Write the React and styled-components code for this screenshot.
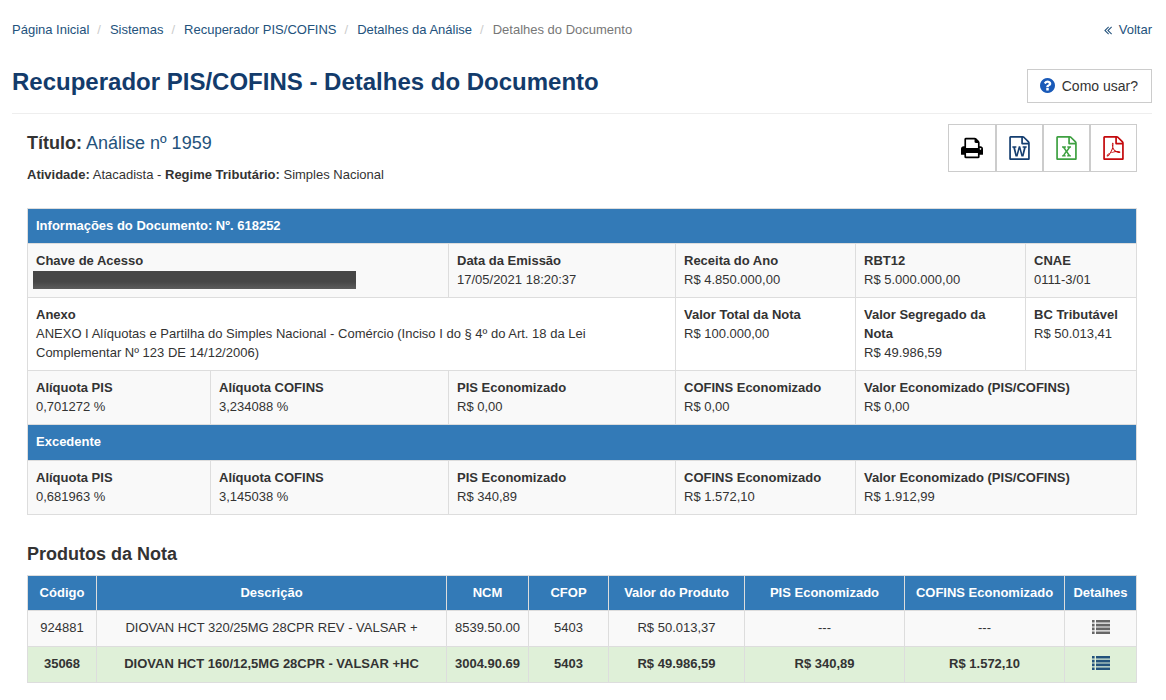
import styled, { createGlobalStyle } from "styled-components";

const infoColumns = [183, 238, 227, 180, 170, 111];

const productColumns = [
  { title: "Código", width: 69 },
  { title: "Descrição", width: 350 },
  { title: "NCM", width: 82 },
  { title: "CFOP", width: 80 },
  { title: "Valor do Produto", width: 136 },
  { title: "PIS Economizado", width: 160 },
  { title: "COFINS Economizado", width: 160 },
  { title: "Detalhes", width: 72 },
];

const products = [
  {
    values: ["924881", "DIOVAN HCT 320/25MG 28CPR REV - VALSAR +", "8539.50.00", "5403", "R$ 50.013,37", "---", "---"],
    active: false,
  },
  {
    values: ["35068", "DIOVAN HCT 160/12,5MG 28CPR - VALSAR +HC", "3004.90.69", "5403", "R$ 49.986,59", "R$ 340,89", "R$ 1.572,10"],
    active: true,
  },
];

const breadcrumbs = ["Página Inicial", "Sistemas", "Recuperador PIS/COFINS", "Detalhes da Análise"];

const FILE_OUTLINE =
  "M1596 380q28 28 48 76t20 88v1152q0 40-28 68t-68 28h-1344q-40 0-68-28t-28-68v-1600q0-40 28-68t68-28h896q40 0 88 20t76 48zm-444-244v376h376q-10-29-22-41l-313-313q-12-12-41-22zm384 1528v-1024h-416q-40 0-68-28t-28-68v-416h-768v1536h1280z";

const FILE_WORD =
  "m-1175-896v107h70l164 661h159l128-485q7-20 10-46 2-16 2-24h4l3 24q1 3 3.5 20t5.5 26l128 485h159l164-661h70v-107h-300v107h90l-99 438q-5 20-7 46l-2 21h-4q0-3-.5-6.5t-1.5-8-1-6.5q-1-5-4-21t-5-25l-144-545h-114l-144 545q-2 9-4.5 24.5t-3.5 21.5l-4 21h-4l-2-21q-2-26-7-46l-99-438h90v-107h-300z";

const FILE_EXCEL =
  "m-979-234v106h281v-106h-75l103-161q5-7 10-16.5t7.5-13.5 3.5-4h2q1 4 5 10 2 4 4.5 7.5t6 8 6.5 8.5l107 161h-76v106h291v-106h-68l-192-273 195-282h67v-107h-279v107h74l-103 159q-4 7-10 16.5t-9 13.5l-2 3h-2q-1-4-5-10-6-11-17-23l-106-159h76v-107h-290v107h68l189 272-194 283h-68z";

const FILE_PDF =
  "m-514-593q33 26 84 56 59-7 117-7 147 0 177 49 16 22 2 52 0 1-1 2l-2 2v1q-6 38-71 38-48 0-115-20t-130-53q-221 24-392 83-153 262-242 262-15 0-28-7l-24-12q-1-1-6-5-10-10-6-36 9-40 56-91.5t132-96.5q14-9 23 6 2 2 2 4 52-85 107-197 68-136 104-262-24-82-30.5-159.5t6.5-127.5q11-40 42-40h22q23 0 35 15 18 21 9 68-2 6-4 8 1 3 1 8v30q-2 123-14 192 55 164 146 238zm-576 411q52-24 137-158-51 40-87.5 84t-49.5 74zm398-920q-15 42-2 132 1-7 7-44 0-3 7-43 1-4 4-8-1-1-1-2-1-2-1-3-1-22-13-36 0 1-1 2v2zm-124 661q135-54 284-81-2-1-13-9.5t-16-13.5q-76-67-127-176-27 86-83 197-30 56-45 83zm646-16q-24-24-140-24 76 28 124 28 14 0 18-1 0-1-2-3z";

const PrintIcon = () => (
  <svg width="22" height="24" viewBox="64 0 1664 1792" fill="currentColor" aria-hidden="true">
    <path d="M448 1536h896v-256h-896v256zm0-640h896v-384h-160q-40 0-68-28t-28-68v-160h-640v640zm1152 64q0-26-19-45t-45-19-45 19-19 45 19 45 45 19 45-19 19-45zm128 0v416q0 13-9.5 22.5t-22.5 9.5h-224v160q0 40-28 68t-68 28h-960q-40 0-68-28t-28-68v-160h-224q-13 0-22.5-9.5t-9.5-22.5v-416q0-79 56.5-135.5t135.5-56.5h64v-544q0-40 28-68t68-28h672q40 0 88 20t76 48l152 152q28 28 48 76t20 88v256h64q79 0 135.5 56.5t56.5 135.5z" />
  </svg>
);

const FileIcon = ({ mark }) => (
  <svg width="21" height="24" viewBox="128 0 1536 1792" fill="currentColor" aria-hidden="true">
    <path d={FILE_OUTLINE + mark} />
  </svg>
);

const BackIcon = () => (
  <svg width="14" height="14" viewBox="0 0 1792 1792" fill="currentColor" aria-hidden="true">
    <path d="M1011 1376q0 13-10 23l-50 50q-10 10-23 10t-23-10l-466-466q-10-10-10-23t10-23l466-466q10-10 23-10t23 10l50 50q10 10 10 23t-10 23l-393 393 393 393q10 10 10 23zm384 0q0 13-10 23l-50 50q-10 10-23 10t-23-10l-466-466q-10-10-10-23t10-23l466-466q10-10 23-10t23 10l50 50q10 10 10 23t-10 23l-393 393 393 393q10 10 10 23z" />
  </svg>
);

const HelpIcon = () => (
  <svg width="15" height="17" viewBox="128 128 1536 1741" fill="currentColor" aria-hidden="true">
    <path d="M1024 1376v-192q0-14-9-23t-23-9h-192q-14 0-23 9t-9 23v192q0 14 9 23t23 9h192q14 0 23-9t9-23zm256-672q0-88-55.5-163t-138.5-116-170-41q-243 0-371 213-15 24 8 42l132 100q7 6 19 6 16 0 25-12 53-68 86-92 34-24 86-24 48 0 85.5 26t37.5 59q0 38-20 61t-68 45q-63 28-115.5 86.5t-52.5 125.5v36q0 14 9 23t23 9h192q14 0 23-9t9-23q0-19 21.5-49.5t54.5-49.5q32-18 49-28.5t46-35 44.5-48 28-60.5 12.5-81zm384 192q0 209-103 385.5t-279.5 279.5-385.5 103-385.5-103-279.5-279.5-103-385.5 103-385.5 279.5-279.5 385.5-103 385.5 103 279.5 279.5 103 385.5z" />
  </svg>
);

const ListIcon = () => (
  <svg width="18" height="14" viewBox="0 0 18 14" fill="currentColor" aria-hidden="true">
    <path d="M0 0h2.6v2.6H0zM4 0h14v2.6H4zM0 3.8h2.6v2.6H0zM4 3.8h14v2.6H4zM0 7.6h2.6v2.6H0zM4 7.6h14v2.6H4zM0 11.4h2.6V14H0zM4 11.4h14V14H4z" />
  </svg>
);

const GlobalStyle = createGlobalStyle`
  * {
    box-sizing: border-box;
  }
  body {
    margin: 0;
    background: #fff;
    color: #333;
    font-family: "Liberation Sans", Arial, sans-serif;
    font-size: 13px;
    line-height: 19px;
  }
  h1, h2, p, ol {
    margin: 0;
    padding: 0;
  }
  svg {
    display: block;
  }
`;

const Page = styled.main`
  padding: 20px 14px 16px 12px;
`;

const TopBar = styled.div`
  display: flex;
  justify-content: space-between;
`;

const Breadcrumb = styled.ol`
  display: flex;
  list-style: none;
`;

const Crumb = styled.li`
  color: #777;
  & + &::before {
    content: "/";
    padding: 0 9px 0 8px;
    color: #ccc;
  }
`;

const Link = styled.a`
  color: #23527c;
  text-decoration: none;
`;

const BackLink = styled(Link)`
  display: flex;
  align-items: center;
  gap: 4px;
`;

const Header = styled.header`
  display: flex;
  align-items: flex-end;
  justify-content: space-between;
  padding: 26px 0 10px;
  border-bottom: 1px solid #eee;
`;

const Title = styled.h1`
  align-self: flex-start;
  color: #133b6b;
  font-size: 24px;
  font-weight: 700;
  line-height: 34px;
`;

const HelpButton = styled.button`
  display: flex;
  align-items: center;
  gap: 7px;
  height: 34px;
  margin-top: 4px;
  padding: 0 13px 0 12px;
  border: 1px solid #ccc;
  background: #fff;
  color: #333;
  font-family: inherit;
  font-size: 14px;
  cursor: pointer;
  & > svg {
    color: #1a5ab8;
  }
`;

const Content = styled.section`
  padding: 10px 15px 0;
`;

const Summary = styled.div`
  display: flex;
  align-items: flex-start;
  justify-content: space-between;
  margin-bottom: 24px;
`;

const Subtitle = styled.h2`
  margin: 9px 0 12px;
  font-size: 18px;
  font-weight: 400;
  line-height: 20px;
`;

const Exports = styled.div`
  display: flex;
`;

const ExportButton = styled.button`
  display: flex;
  align-items: center;
  height: 48px;
  padding: 0 12px;
  border: 1px solid #ccc;
  background: #fff;
  color: ${({ $color }) => $color};
  cursor: pointer;
`;

const Table = styled.table`
  width: 100%;
  table-layout: fixed;
  border-collapse: collapse;
`;

const Col = styled.col`
  width: ${({ $width }) => $width}px;
`;

const HeadCell = styled.th`
  padding: 7px 8px 8px;
  border: 1px solid #ddd;
  background: #337ab7;
  color: #fff;
  font-weight: 700;
  text-align: ${({ $align }) => $align || "center"};
  white-space: nowrap;
`;

const SectionCell = styled.td`
  padding: 7px 8px 9px;
  border: 1px solid #ddd;
  background: #337ab7;
  color: #fff;
  font-weight: 700;
`;

const Row = styled.tr`
  background: ${({ $active, $striped }) => ($active ? "#dff0d8" : $striped ? "#f9f9f9" : "#fff")};
  font-weight: ${({ $active }) => ($active ? 700 : 400)};
`;

const InfoCell = styled.td`
  padding: 7px 8px 8px;
  border: 1px solid #ddd;
  vertical-align: top;
`;

const Label = styled.strong`
  display: block;
`;

const Redacted = styled.div`
  width: 80%;
  max-width: 324px;
  height: 18px;
  margin: 1px -3px 0;
  background: linear-gradient(#464646 60%, #5c5c5c);
`;

const SectionTitle = styled.h2`
  margin: 29px 0 11px;
  font-size: 18px;
  font-weight: 700;
  line-height: 20px;
`;

const ProductCell = styled.td`
  padding: 7px 4px 9px;
  border: 1px solid #ddd;
  text-align: center;
`;

const DetailLink = styled.a`
  display: flex;
  justify-content: center;
  height: 19px;
  padding-top: 2px;
  color: ${({ $active }) => ($active ? "#23527c" : "#666")};
`;

const Field = ({ label, children, span }) => (
  <InfoCell colSpan={span}>
    <Label>{label}</Label>
    {children}
  </InfoCell>
);

const App = () => {
  return (
    <Page>
      <GlobalStyle />
      <TopBar>
        <Breadcrumb aria-label="breadcrumb">
          {breadcrumbs.map((item) => (
            <Crumb key={item}>
              <Link href="#">{item}</Link>
            </Crumb>
          ))}
          <Crumb>Detalhes do Documento</Crumb>
        </Breadcrumb>
        <BackLink href="#">
          <BackIcon />
          Voltar
        </BackLink>
      </TopBar>

      <Header>
        <Title>Recuperador PIS/COFINS - Detalhes do Documento</Title>
        <HelpButton type="button">
          <HelpIcon />
          Como usar?
        </HelpButton>
      </Header>

      <Content>
        <Summary>
          <div>
            <Subtitle>
              <strong>Título:</strong> <Link href="#">Análise nº 1959</Link>
            </Subtitle>
            <p>
              <strong>Atividade:</strong> Atacadista - <strong>Regime Tributário:</strong> Simples Nacional
            </p>
          </div>
          <Exports>
            <ExportButton type="button" $color="#000" aria-label="Imprimir">
              <PrintIcon />
            </ExportButton>
            <ExportButton type="button" $color="#153e70" aria-label="Word">
              <FileIcon mark={FILE_WORD} />
            </ExportButton>
            <ExportButton type="button" $color="#3fa142" aria-label="Excel">
              <FileIcon mark={FILE_EXCEL} />
            </ExportButton>
            <ExportButton type="button" $color="#c4090c" aria-label="PDF">
              <FileIcon mark={FILE_PDF} />
            </ExportButton>
          </Exports>
        </Summary>

        <Table>
          <colgroup>
            {infoColumns.map((width, i) => (
              <Col key={i} $width={width} />
            ))}
          </colgroup>
          <thead>
            <tr>
              <HeadCell colSpan={6} $align="left">
                Informações do Documento: Nº. 618252
              </HeadCell>
            </tr>
          </thead>
          <tbody>
            <Row $striped>
              <Field label="Chave de Acesso" span={2}>
                <Redacted />
              </Field>
              <Field label="Data da Emissão">17/05/2021 18:20:37</Field>
              <Field label="Receita do Ano">R$ 4.850.000,00</Field>
              <Field label="RBT12">R$ 5.000.000,00</Field>
              <Field label="CNAE">0111-3/01</Field>
            </Row>
            <Row>
              <Field label="Anexo" span={3}>
                ANEXO I Alíquotas e Partilha do Simples Nacional - Comércio (Inciso I do § 4º do Art. 18 da Lei
                Complementar Nº 123 DE 14/12/2006)
              </Field>
              <Field label="Valor Total da Nota">R$ 100.000,00</Field>
              <Field label="Valor Segregado da Nota">R$ 49.986,59</Field>
              <Field label="BC Tributável">R$ 50.013,41</Field>
            </Row>
            <Row $striped>
              <Field label="Alíquota PIS">0,701272 %</Field>
              <Field label="Alíquota COFINS">3,234088 %</Field>
              <Field label="PIS Economizado">R$ 0,00</Field>
              <Field label="COFINS Economizado">R$ 0,00</Field>
              <Field label="Valor Economizado (PIS/COFINS)" span={2}>
                R$ 0,00
              </Field>
            </Row>
            <tr>
              <SectionCell colSpan={6}>Excedente</SectionCell>
            </tr>
            <Row $striped>
              <Field label="Alíquota PIS">0,681963 %</Field>
              <Field label="Alíquota COFINS">3,145038 %</Field>
              <Field label="PIS Economizado">R$ 340,89</Field>
              <Field label="COFINS Economizado">R$ 1.572,10</Field>
              <Field label="Valor Economizado (PIS/COFINS)" span={2}>
                R$ 1.912,99
              </Field>
            </Row>
          </tbody>
        </Table>

        <SectionTitle>Produtos da Nota</SectionTitle>

        <Table>
          <colgroup>
            {productColumns.map(({ title, width }) => (
              <Col key={title} $width={width} />
            ))}
          </colgroup>
          <thead>
            <tr>
              {productColumns.map(({ title }) => (
                <HeadCell key={title}>{title}</HeadCell>
              ))}
            </tr>
          </thead>
          <tbody>
            {products.map(({ values, active }) => (
              <Row key={values[0]} $striped $active={active}>
                {values.map((value, i) => (
                  <ProductCell key={i}>{value}</ProductCell>
                ))}
                <ProductCell>
                  <DetailLink href="#" $active={active} aria-label="Detalhes">
                    <ListIcon />
                  </DetailLink>
                </ProductCell>
              </Row>
            ))}
          </tbody>
        </Table>
      </Content>
    </Page>
  );
};

export default App;
